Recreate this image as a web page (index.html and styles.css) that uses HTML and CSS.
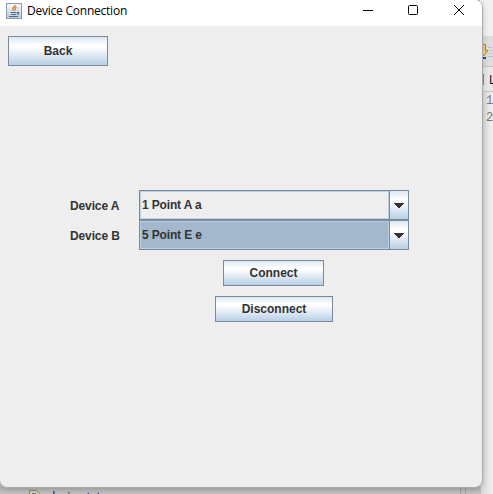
FILE: index.html
```html
<!DOCTYPE html>
<html lang="en">
<head>
<meta charset="utf-8">
<title>Device Connection</title>
<link rel="stylesheet" href="styles.css">
</head>
<body>
<div class="desktop">
  <div class="editor">
    <div class="editor-top"></div>
    <div class="editor-tools">
      <svg width="10" height="18" viewBox="0 0 10 18"><path d="M-2 1.500h4.500v6h2.500L.5 13-3 9" fill="#f5d36b" stroke="#b8862c"/><path d="M0 15h3" stroke="#24508c" stroke-width="2"/><path d="M5 4.500h4M7 7.500h3M6 10.500h3M5 13.500h5" stroke="#b9bfd6"/></svg>
    </div>
    <div class="editor-tab"><span class="tab-icon"></span><span>L</span></div>
    <div class="editor-lines"><div>1</div><div>2</div></div>
  </div>
  <div class="files">
    <svg class="file-icon" width="12" height="14" viewBox="0 0 12 14"><path d="M.5.5h7l4 4v9H.5z" fill="#d3cdb8" stroke="#8e845f"/><path d="M3 3h4v5H3z" fill="#66789b"/></svg>
    <span class="file-name">design.txt</span>
    <span class="splitter"></span>
  </div>

  <main class="window">
    <header class="titlebar">
      <svg class="java" width="16" height="16" viewBox="0 0 16 16"><defs><linearGradient id="jg" x2="0" y2="1"><stop stop-color="#f8fafb"/><stop offset="1" stop-color="#b9cad6"/></linearGradient></defs><rect x=".5" y=".5" width="15" height="15" fill="url(#jg)" stroke="#8d9ca8"/><path d="M9 2c.8 1.800-3 2.500-2.200 4.300.3.800 1 1.100 1 1.700M10.500 4c-2 1-1.500 2-1 3.500" fill="none" stroke="#e9822c" stroke-width="1.400"/><path d="M4.500 9.500h6M5 11.500h5M3 13.500h9M11 9.500c2.500-.5 2 1.500 0 2" fill="none" stroke="#486f8f" stroke-width="1.100"/></svg>
      <h1>Device Connection</h1>
      <svg class="controls" width="102" height="12" viewBox="0 0 102 12" fill="none" stroke="#000"><path d="M0 6.500h10"/><rect x="45.500" y="1.500" width="9" height="9" rx="1"/><path d="M91 1l10 10M101 1L91 11"/></svg>
    </header>
    <button class="btn back">Back</button>
    <section class="form">
      <label>Device A</label>
      <div class="combo"><div class="value">1 Point A a</div><div class="arrow"><svg width="10" height="5" viewBox="0 0 10 5" shape-rendering="crispEdges"><path d="M0 0h10v1H9v1H8v1H7v1H6v1H4V4H3V3H2V2H1V1H0z" fill="#333"/></svg></div></div>
      <label>Device B</label>
      <div class="combo focused"><div class="value">5 Point E e</div><div class="arrow"><svg width="10" height="5" viewBox="0 0 10 5" shape-rendering="crispEdges"><path d="M0 0h10v1H9v1H8v1H7v1H6v1H4V4H3V3H2V2H1V1H0z" fill="#333"/></svg></div></div>
    </section>
    <div class="actions">
      <button class="btn connect">Connect</button>
      <button class="btn disconnect">Disconnect</button>
    </div>
  </main>
</div>
</body>
</html>
```
FILE: styles.css
```css
* { box-sizing: border-box; }
body { margin: 0; background: #c4c4c4; }
.desktop { position: relative; width: 493px; height: 494px; overflow: hidden; background: #c4c4c4; }

.editor { width: 13px; height: 494px; margin-left: 480px; background: linear-gradient(90deg, #dcdcdc 2px, #f0f0f0); font: 12px "Liberation Mono", monospace; }
.editor-top { height: 36px; background: #f1f1f1; }
.editor-tools { height: 30px; padding: 7px 0 0 3px; background: #dedede; }
.editor-tools svg { display: block; }
.editor-tab { display: flex; align-items: center; gap: 5px; height: 26px; padding-left: 0; border-top: 1px solid #c6c6c6; border-bottom: 1px solid #c6c6c6; background: #e9e9e9; font: 12px "Open Sans", sans-serif; color: #000; }
.tab-icon { flex: none; width: 4px; height: 11px; border: 1px solid #a58c4b; border-left: 0; }
.editor-lines { padding: 1px 0 0 6px; color: #787878; line-height: 17px; }

.files { position: absolute; left: 0; top: 487px; width: 481px; height: 7px; overflow: hidden; background: linear-gradient(#b4b4b4, #c4c4c4); display: flex; align-items: flex-start; font: 12px/16px "Open Sans", sans-serif; color: #111; }
.file-icon { flex: none; margin: 3px 0 0 29px; }
.file-name { margin: 2px 0 0 7px; letter-spacing: -.2px; }
.splitter { width: 6px; height: 7px; margin-left: auto; margin-right: 15px; border: solid #a0a0a0; border-width: 0 1px; }

.window { position: absolute; left: -1px; top: 0; width: 484px; height: 488px; border: 1px solid #a9a9a9; border-top: 0; border-radius: 0 8px 8px 8px; background: #eee; overflow: hidden; font: bold 12px "Liberation Sans", sans-serif; color: #333; box-shadow: 0 1px 6px rgba(0, 0, 0, .2); }
.titlebar { display: flex; align-items: center; height: 26px; padding: 0 17px 5px 6px; background: #fff; }
.titlebar h1 { margin: 0 0 0 5px; font: 12px/16px "Open Sans", sans-serif; letter-spacing: -.23px; color: #000; white-space: nowrap; }
.controls { margin-left: auto; margin-top: -2px; }

.btn { display: block; padding: 0; border: 1px solid #7a8a99; border-radius: 0; background: linear-gradient(#dde8f3 0%, #fff 30%, #fff 35%, #b8cfe5 100%); font: inherit; color: #333; box-shadow: none; }
.back { width: 100px; height: 30px; margin: 10px 0 0 8px; }
.form { display: grid; grid-template-columns: 69px 270px; grid-auto-rows: 30px; align-items: center; margin: 124px 0 0 70px; }
.form label { padding-top: 2px; letter-spacing: -.12px; }
.combo { display: flex; height: 30px; border: 1px solid #7a8a99; }
.value { flex: 1; height: 28px; padding-left: 1px; border: 1px solid #b8cfe5; line-height: 26px; letter-spacing: -.15px; }
.focused .value { background: #a3b8cc; }
.arrow { width: 19px; display: flex; align-items: center; justify-content: center; padding-top: 1px; border-left: 1px solid #7a8a99; background: linear-gradient(#dde8f3, #fff 30%, #fff 35%, #b8cfe5); }
.actions { display: flex; flex-direction: column; gap: 10px; width: 118px; margin: 10px 0 0 215px; }
.connect { width: 101px; height: 26px; margin-left: 8px; }
.disconnect { width: 118px; height: 26px; }
```
